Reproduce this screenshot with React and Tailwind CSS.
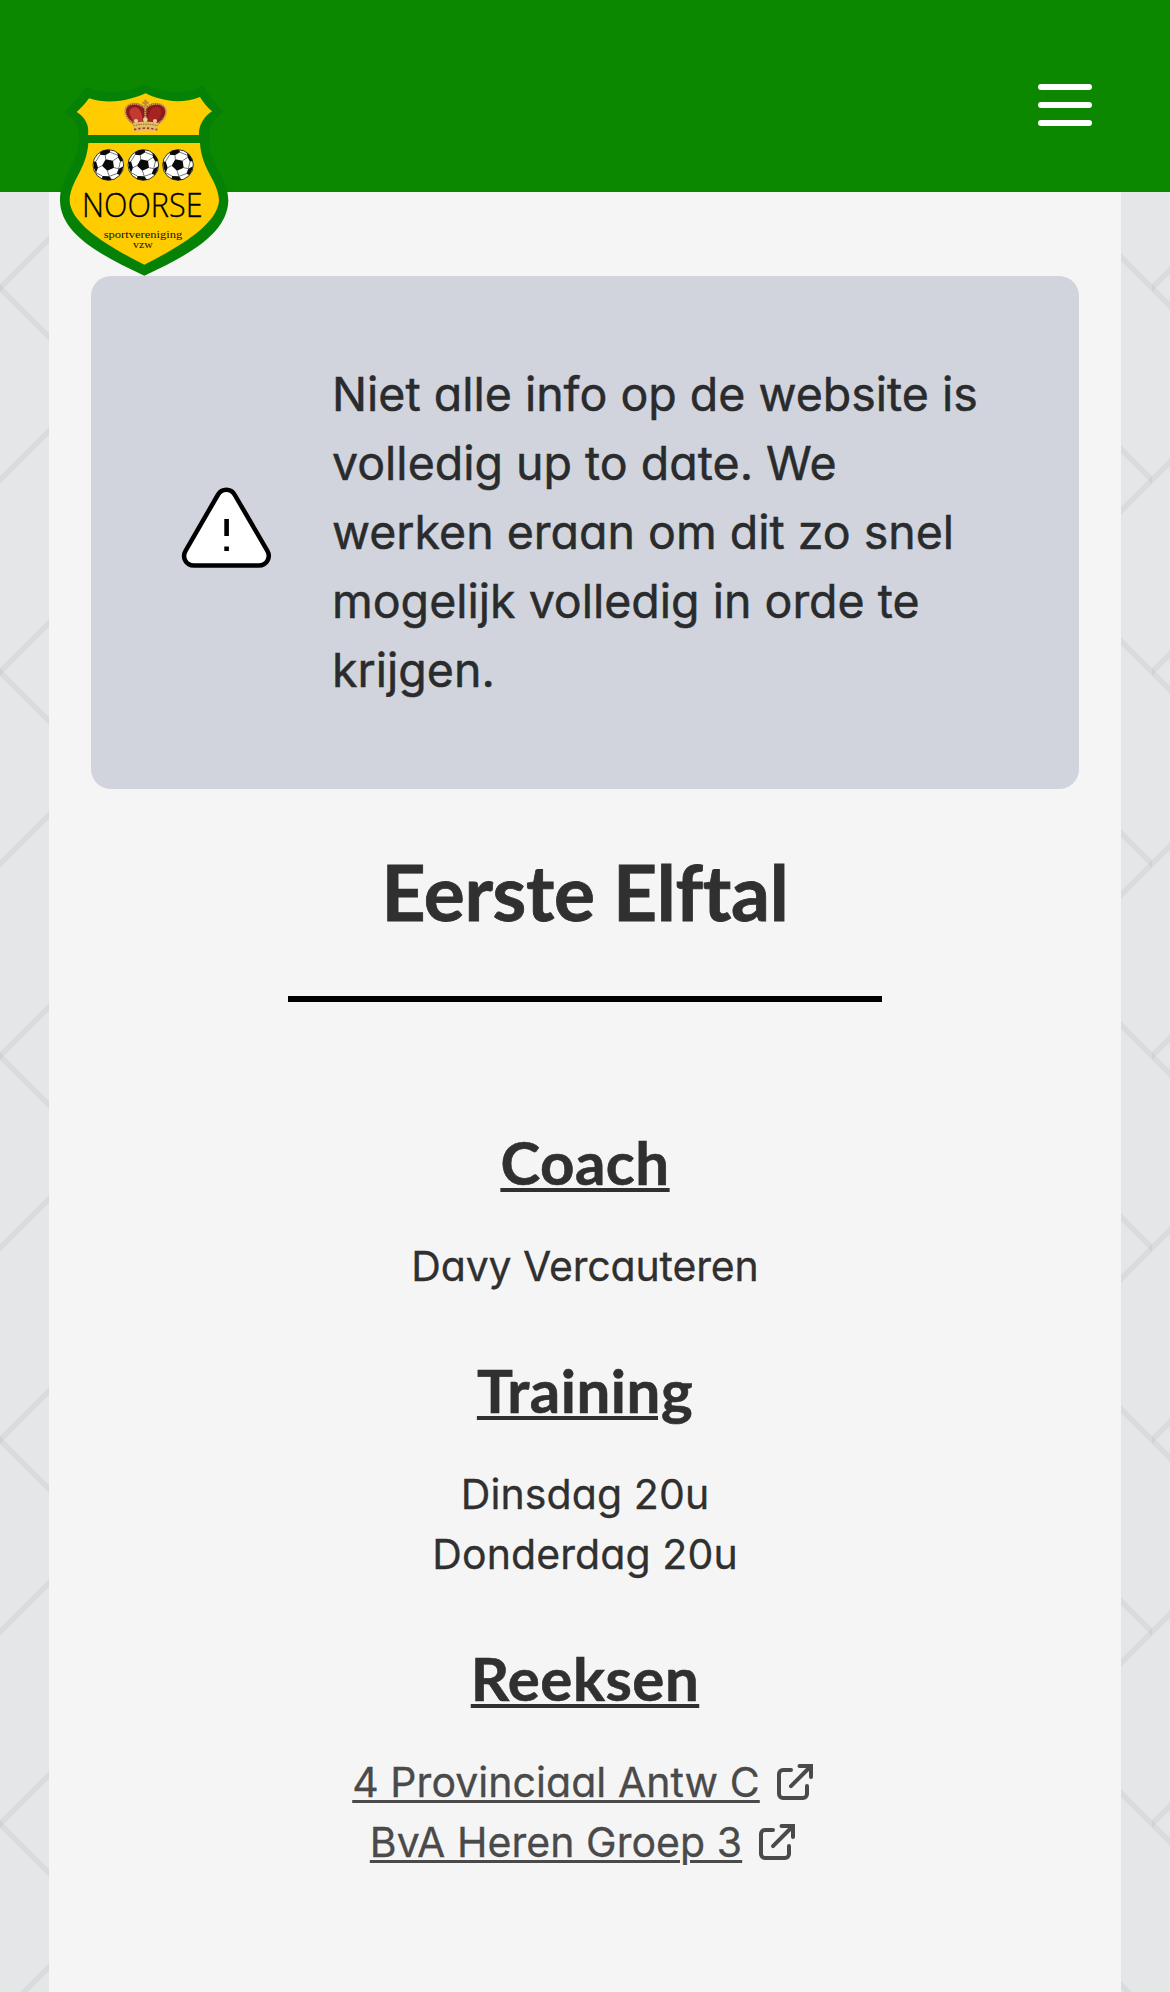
function Backdrop() {
  return (
    <svg className="absolute inset-0 h-full w-full" aria-hidden="true">
      <defs>
        <pattern id="weave" width="384" height="384" patternUnits="userSpaceOnUse">
          <g stroke="#9ca3af" strokeOpacity="0.16" strokeWidth="5.8">
            <path d="M-10 298 L70 218" />
            <path d="M-10 278 L70 358" />
            <path d="M-10 106 L70 26" />
            <path d="M314 218 L394 298" />
            <path d="M314 26 L394 106" />
            <path d="M314 166 L394 86" />
          </g>
        </pattern>
      </defs>
      <rect width="100%" height="100%" fill="url(#weave)" />
    </svg>
  );
}

function Football({ x, y }) {
  return (
    <g transform={`translate(${x} ${y})`}>
      <circle r="46" fill="#fff" stroke="#111" strokeWidth="2.5" />
      <g fill="#0a0a0a">
        <path d="M-8 -17 L14 -13 L17 8 L-3 17 L-19 2 Z" />
        <path d="M-24 -39 Q-9 -47 4 -45 L6 -38 L-9 -29 L-25 -31 Z" />
        <path d="M27 -37 Q40 -27 44 -12 L36 -10 L29 -23 Z" />
        <path d="M45 4 Q42 20 34 30 L25 26 L31 11 Z" />
        <path d="M-18 33 L3 34 L11 44 Q-4 48 -19 41 Z" />
        <path d="M-45 -9 L-37 -11 L-31 8 L-37 23 Q-45 9 -45 -9 Z" />
      </g>
      <path
        d="M-8 -17 L-9 -29 M14 -13 L29 -23 M6 -38 L29 -29 M17 8 L31 11 M36 -10 L31 11 M-3 17 L3 34 M25 26 L3 34 M-19 2 L-31 8 M-37 23 L-18 33 M-37 -11 L-25 -31"
        stroke="#333"
        strokeWidth="2"
        fill="none"
      />
    </g>
  );
}

function Crown() {
  return (
    <g>
      <path d="M281 164 C258 150 248 120 262 107 C276 94 302 98 316 112 C330 98 356 94 370 107 C386 122 376 150 353 164 Z" fill="#8c1a1c" />
      <path d="M274 142 C264 128 268 114 282 112 C298 110 308 128 308 156 L281 158 Z" fill="#c23a32" />
      <path d="M359 142 C369 128 365 114 350 112 C334 110 325 128 325 156 L352 158 Z" fill="#a52322" />
      <g fill="none" stroke="#c9a05a" strokeWidth="6" strokeDasharray="5 1.5">
        <path d="M283 162 C256 148 248 120 262 108 C276 96 304 100 316 116 C328 100 358 96 371 108 C386 122 378 148 352 162" />
        <path d="M316 112 V160" />
      </g>
      <path d="M313 89 h7 v6 h6 v6 h-6 v8 h-7 v-8 h-6 v-6 h6 Z" fill="#b98a3a" />
      <path d="M280 159 Q316 150 354 159 L352 186 Q316 177 282 186 Z" fill="#e3bd6a" />
      <path d="M281 167 Q316 158 353 167" stroke="#8a5a22" strokeWidth="3" strokeDasharray="4 3" fill="none" />
      <path d="M282 179 Q316 170 352 179" stroke="#a33a22" strokeWidth="5" strokeDasharray="7 6" fill="none" />
      <g fill="#e8cf98">
        <circle cx="288" cy="153" r="6" />
        <circle cx="316" cy="149" r="7" />
        <circle cx="345" cy="153" r="6" />
      </g>
    </g>
  );
}

function Crest() {
  return (
    <svg viewBox="0 0 630 660" className="absolute top-[70px] left-[40px] h-[220px] w-[210px]" role="img" aria-label="Noorse sportvereniging">
      <path
        d="M317 42 C275 62 205 82 140 50 C122 72 98 102 72 127 C104 142 122 178 116 215 C108 290 60 320 60 392 C62 488 172 552 313 617 C454 552 562 488 565 392 C564 320 514 290 508 215 C504 178 520 142 552 125 C528 102 506 74 490 47 C428 78 362 66 317 42 Z"
        fill="#058205"
      />
      <path
        d="M317 70 C278 88 212 106 147 85 C136 100 124 114 110 126 C138 144 148 168 144 195 H477 C476 166 490 142 516 124 C502 112 490 98 480 81 C420 104 362 92 317 70 Z"
        fill="#fc0"
      />
      <path
        d="M145 219 H480 C484 298 536 334 537 392 C532 462 420 530 313 584 C206 530 92 462 89 392 C90 334 140 298 145 219 Z"
        fill="#fc0"
      />
      <Crown />
      <Football x={205} y={285} />
      <Football x={310} y={285} />
      <Football x={414} y={285} />
      <text x="126" y="440" fontFamily="'Open Sans', sans-serif" fontWeight="300" fontSize="101" textLength="362" lengthAdjust="spacingAndGlyphs" fill="#000" stroke="#000" strokeWidth="1">NOORSE</text>
      <text x="191" y="503" fontFamily="'Liberation Serif', serif" fontSize="33" textLength="236" lengthAdjust="spacingAndGlyphs" fill="#111">sportvereniging</text>
      <text x="279" y="533" fontFamily="'Liberation Serif', serif" fontSize="33" textLength="59" lengthAdjust="spacingAndGlyphs" fill="#111">vzw</text>
    </svg>
  );
}

function WarningIcon() {
  return (
    <svg viewBox="0 0 112 112" className="mb-[14px] h-[112px] w-[112px] shrink-0" aria-hidden="true">
      <path
        d="M24 95.5 C16 95.5 11.5 87.5 15.8 80.3 L47.8 25 C51.8 18 60.8 18 64.8 25 L97.1 80.3 C101.4 87.5 96.5 95.5 88.8 95.5 Z"
        fill="#fff"
        stroke="#000"
        strokeWidth="4.5"
      />
      <path d="M56.6 49 V66 M56.6 76.6 V81" stroke="#000" strokeWidth="4.6" />
    </svg>
  );
}

function ExternalIcon() {
  return (
    <svg viewBox="0 0 36 36" className="mr-[5px] ml-[17px] h-9 w-9 overflow-visible" fill="none" stroke="currentColor" strokeWidth="4" strokeLinecap="round" aria-hidden="true">
      <path d="M14 6 H6 a4 4 0 0 0 -4 4 V30 a4 4 0 0 0 4 4 H26 a4 4 0 0 0 4 -4 V22" strokeLinejoin="round" />
      <path d="M14 22.2 L33 3 M22.5 2 H34 V13" />
    </svg>
  );
}

function SectionTitle({ children }) {
  return (
    <h2 className="font-['Lato',sans-serif] text-[60px] leading-[72px] font-bold tracking-[0.5px] underline decoration-[3.6px] underline-offset-[3px] [-webkit-text-stroke:0.6px]">{children}</h2>
  );
}

function SeriesLink({ children }) {
  return (
    <a href="#" className="flex items-center text-[#4a4a4a]">
      <span className="tracking-[0.05px] underline decoration-[3px] underline-offset-[3px]">{children}</span>
      <ExternalIcon />
    </a>
  );
}

export default function App() {
  return (
    <div className="relative flex h-[1992px] w-[1170px] flex-col overflow-hidden bg-[#e5e6e8] font-['Inter',sans-serif] text-[#303030] [font-feature-settings:'cv11']">
      <Backdrop />
      <header className="relative z-10 flex h-48 shrink-0 items-start justify-end bg-[#0b8800] pt-[84px] pr-[78px]">
        <Crest />
        <button type="button" aria-label="Menu" className="flex w-[54px] flex-col gap-3">
          <span className="h-1.5 rounded-full bg-white" />
          <span className="h-1.5 rounded-full bg-white" />
          <span className="h-1.5 rounded-full bg-white" />
        </button>
      </header>
      <main className="relative mx-[49px] flex flex-1 flex-col items-center bg-[#f5f5f5] px-[42px] pt-[84px]">
        <div className="flex h-[513px] w-full items-center rounded-[20px] bg-[#d1d4dc] pl-[79px] text-[#2a2b2c]">
          <WarningIcon />
          <p className="ml-[50px] text-[46.5px] leading-[69px] whitespace-nowrap [-webkit-text-stroke:0.5px]">
            Niet alle info op de website is
            <br />
            volledig up to date. We
            <br />
            werken eraan om dit zo snel
            <br />
            mogelijk volledig in orde te
            <br />
            krijgen.
          </p>
        </div>
        <h1 className="mt-14 font-['Lato',sans-serif] text-[76.8px] leading-[92px] font-bold tracking-[-0.3px] [-webkit-text-stroke:0.8px] [font-variant-ligatures:none]">Eerste Elftal</h1>
        <div className="mt-[59px] h-1.5 w-[594px] bg-black" />
        <section className="mt-[124px] flex flex-col items-center text-[41px] leading-[60px]">
          <SectionTitle>Coach</SectionTitle>
          <p className="mt-[38px] tracking-[-0.15px] [-webkit-text-stroke:0.3px]">Davy Vercauteren</p>
        </section>
        <section className="mt-[58px] flex flex-col items-center text-center text-[41px] leading-[60px]">
          <SectionTitle>Training</SectionTitle>
          <p className="mt-[38px] tracking-[0.1px] [-webkit-text-stroke:0.3px]">
            Dinsdag 20u
            <br />
            Donderdag 20u
          </p>
        </section>
        <section className="mt-[58px] flex flex-col items-center text-[41px] leading-[60px]">
          <SectionTitle>Reeksen</SectionTitle>
          <div className="mt-[38px] flex flex-col items-center [-webkit-text-stroke:0.3px]">
            <SeriesLink>4 Provinciaal Antw C</SeriesLink>
            <SeriesLink>BvA Heren Groep 3</SeriesLink>
          </div>
        </section>
      </main>
    </div>
  );
}
